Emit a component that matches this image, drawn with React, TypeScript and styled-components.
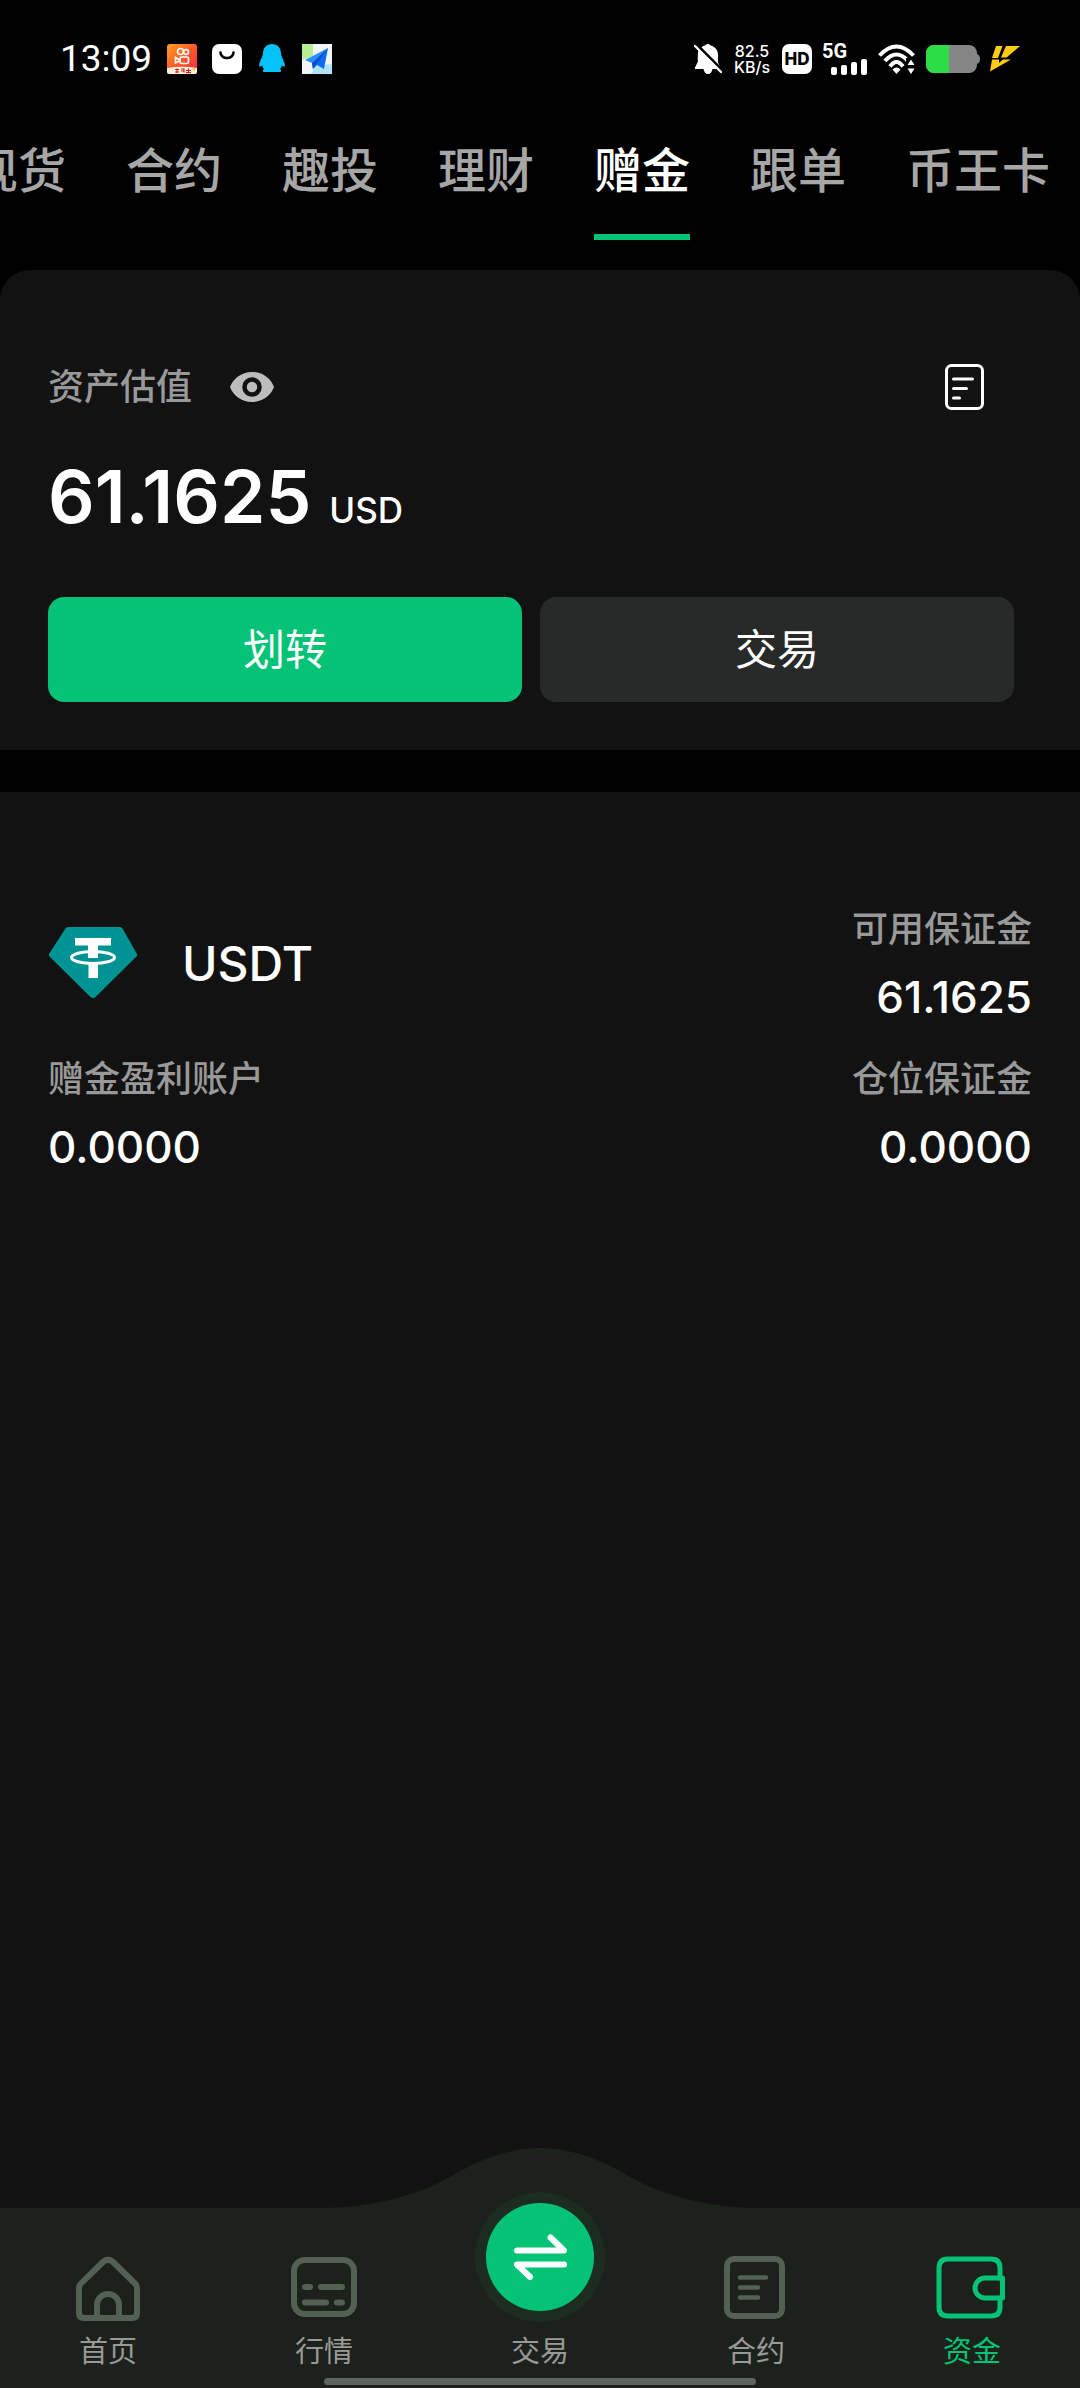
import React from 'react';
import styled, { createGlobalStyle } from 'styled-components';

const color = {
  green: '#04c276',
  panel: '#121212',
  nav: '#1c211c',
  muted: '#999999',
  tab: '#a6a6a6',
  navIcon: '#536053',
};

const GlobalStyle = createGlobalStyle`
  * { box-sizing: border-box; }
  body {
    margin: 0;
    background: #000;
    color: #fff;
    font-family: Inter, "Noto Sans CJK SC", sans-serif;
  }
  button { font: inherit; color: inherit; border: 0; background: none; padding: 0; }
  a { color: inherit; text-decoration: none; }
  svg { display: block; flex: none; }
  dl, dd, h2, p { margin: 0; font-weight: inherit; }
`;

const Page = styled.div`
  display: flex;
  flex-direction: column;
  min-height: 100vh;
`;

/* ---------- status bar ---------- */

const StatusBar = styled.header`
  display: flex;
  align-items: center;
  justify-content: space-between;
  height: 118px;
  padding: 0 60px;
`;

const StatusGroup = styled.div<{ $gap: number }>`
  display: flex;
  align-items: center;
  gap: ${(p) => p.$gap}px;
`;

const Clock = styled.time`
  font-family: Roboto, sans-serif;
  font-size: 37px;
  line-height: 40px;
`;

const Speed = styled.div`
  display: flex;
  flex-direction: column;
  align-items: center;
  padding: 0 2px;
  font-size: 16px;
  line-height: 16px;
  font-weight: 500;
`;

const HdBadge = styled.span`
  display: grid;
  place-items: center;
  width: 30px;
  height: 30px;
  border-radius: 7px;
  background: #fff;
  color: #000;
  font-size: 17px;
  line-height: 17px;
  font-weight: 800;
`;

const Signal = styled.div`
  display: flex;
  flex-direction: column;
  width: 46px;
  height: 32px;
`;

const SignalKind = styled.span`
  font-family: Roboto, sans-serif;
  font-size: 20px;
  line-height: 16px;
  font-weight: 700;
`;

const Bars = styled.svg`
  align-self: flex-end;
`;

/* ---------- tabs ---------- */

const Tabs = styled.nav`
  display: flex;
  justify-content: flex-end;
  gap: 60px;
  padding: 23px 30px 30px;
  overflow: hidden;
`;

const Tab = styled.a<{ $active?: boolean }>`
  flex: none;
  padding-bottom: 33px;
  border-bottom: 6px solid ${(p) => (p.$active ? color.green : 'transparent')};
  color: ${(p) => (p.$active ? '#fff' : color.tab)};
  font-size: 48px;
  line-height: 60px;
  font-weight: 500;
`;

/* ---------- balance ---------- */

const Balance = styled.section`
  padding: 94px 66px 48px 48px;
  border-radius: 30px 30px 0 0;
  background: ${color.panel};
`;

const BalanceHead = styled.div`
  display: flex;
  align-items: center;
  height: 46px;
`;

const BalanceTitle = styled.h2`
  color: ${color.muted};
  font-size: 36px;
  line-height: 46px;
  font-weight: 500;
`;

const IconButton = styled.button<{ $push?: boolean }>`
  margin-left: ${(p) => (p.$push ? 'auto' : '38px')};
  margin-right: ${(p) => (p.$push ? '30px' : '0')};
`;

const Amount = styled.p`
  display: flex;
  align-items: baseline;
  gap: 18px;
  margin-top: 45px;
  font-size: 73px;
  line-height: 84px;
  font-weight: 600;
`;

const Unit = styled.span`
  font-size: 35px;
  line-height: 36px;
  font-weight: 500;
`;

const Actions = styled.div`
  display: grid;
  grid-template-columns: 1fr 1fr;
  gap: 18px;
  margin-top: 58px;
`;

const Action = styled.button<{ $primary?: boolean }>`
  height: 105px;
  border-radius: 16px;
  background: ${(p) => (p.$primary ? color.green : '#282a29')};
  font-size: 42px;
  line-height: 60px;
`;

/* ---------- assets ---------- */

const Assets = styled.main`
  flex: 1;
  margin-top: 42px;
  padding: 110px 48px;
  background: ${color.panel};
`;

const AssetGrid = styled.dl`
  display: grid;
  grid-template-columns: 1fr 1fr;
  row-gap: 28px;
`;

const Coin = styled.div`
  display: flex;
  align-items: center;
  gap: 44px;
  font-size: 48px;
  font-weight: 500;
`;

const Metric = styled.div<{ $end?: boolean }>`
  display: flex;
  flex-direction: column;
  gap: 14px;
  text-align: ${(p) => (p.$end ? 'right' : 'left')};
`;

const MetricLabel = styled.dt`
  color: ${color.muted};
  font-size: 36px;
  line-height: 54px;
  font-weight: 500;
`;

const MetricValue = styled.dd`
  font-size: 44px;
  line-height: 54px;
  font-weight: 500;
`;

/* ---------- bottom navigation ---------- */

const BottomNav = styled.nav`
  position: sticky;
  bottom: 0;
  display: grid;
  grid-template-columns: repeat(5, 1fr);
  background: ${color.nav};
`;

const Hump = styled.svg`
  position: absolute;
  left: 50%;
  bottom: 100%;
  transform: translateX(-50%);
`;

const NavItem = styled.a<{ $active?: boolean }>`
  position: relative;
  display: flex;
  flex-direction: column;
  align-items: center;
  justify-content: flex-end;
  gap: 12px;
  height: 180px;
  padding-bottom: 18px;
  color: ${(p) => (p.$active ? color.green : color.muted)};
  font-size: 29px;
  line-height: 36px;
`;

const HomeIndicator = styled.div`
  position: absolute;
  left: 50%;
  bottom: 3px;
  width: 40%;
  height: 7px;
  border-radius: 4px;
  background: #5f655f;
  transform: translateX(-50%);
`;

/* ---------- drawings ---------- */

const VideoAppIcon = () => (
  <svg width="30" height="30" viewBox="0 0 30 30">
    <defs>
      <linearGradient id="sunset" x1="0" y1="0" x2="1" y2="1">
        <stop offset="0" stopColor="#ffa01e" />
        <stop offset="0.5" stopColor="#ff5a2e" />
        <stop offset="1" stopColor="#f5254a" />
      </linearGradient>
    </defs>
    <rect width="30" height="30" rx="3" fill="url(#sunset)" />
    <g fill="none" stroke="#fff" strokeWidth="1.6">
      <circle cx="13.5" cy="7.5" r="3" />
      <circle cx="19" cy="8" r="2.5" />
      <rect x="13" y="13" width="8.5" height="6.5" rx="1.5" />
      <path d="M12.5 16 8.5 13.500V19L12.5 17" />
    </g>
    <path d="M0 24Q15 21.5 30 24V28a2 2 0 0 1-2 2H2a2 2 0 0 1-2-2Z" fill="#ffeeda" />
    <path d="M8 25.5h4M8 28h4M10 24.5v4.5M14 25h3v3.5M14 27h3M19 26.5h5M21.5 24.5v4M19 28.7h5" stroke="#c8281e" strokeWidth="1.2" fill="none" />
    <circle cx="27" cy="25" r="1.5" fill="#ffc83c" />
  </svg>
);

const BagAppIcon = () => (
  <svg width="30" height="30" viewBox="0 0 30 30">
    <rect width="30" height="30" rx="7" fill="#fff" />
    <path d="M8.5 8.5a6.5 5.5 0 0 0 13 0" fill="none" stroke="#000" strokeWidth="2.6" strokeLinecap="round" />
  </svg>
);

const PenguinIcon = () => (
  <svg width="30" height="30" viewBox="0 0 30 30">
    <path
      d="M15 0C9.500 0 6 4 6 9.500c0 3-3.800 7.500-3.800 12 0 2 1.500 1 3 0 .3 1.600 1 2.600 2 3.500-2 .8-1.700 3 .3 3h15c2 0 2.300-2.200.3-3 1-.9 1.700-1.900 2-3.500 1.500 1 3 2 3 0 0-4.500-3.800-9-3.800-12C24 4 20.500 0 15 0Z"
      fill="#05c3f9"
    />
  </svg>
);

const MapAppIcon = () => (
  <svg width="30" height="30" viewBox="0 0 30 30">
    <rect width="30" height="30" fill="#f1f6fa" />
    <path d="M0 0h11v12L0 16Z" fill="#b6ec92" />
    <path d="M9 30 14 22 30 20V30Z" fill="#aee3fb" />
    <path d="M26 4 3 16l7 3Z" fill="#2a90ff" />
    <path d="M26 4 10 19l1 6 4-4 7 4Z" fill="#0b6cf2" />
    <path d="M26 4 10 19l1 6Z" fill="#0a4fd0" />
  </svg>
);

const MutedBellIcon = () => (
  <svg width="28" height="30" viewBox="0 0 28 30">
    <path
      d="M13.500 0a3 3 0 0 0-2.600 1.600C6 3 3.800 6.500 3.800 11v7L1 23.500c-.4 1 .1 1.500 1 1.500h7.500c.5 3 2.300 5 4.500 5s4-2 4.500-5H25c1 0 1.500-.6 1-1.500L24 18v-7c0-4.500-2.300-8-7.400-9.400A3.300 3.300 0 0 0 13.500 0Z"
      fill="#fff"
    />
    <path d="M2 0 28 26" stroke="#000" strokeWidth="3" />
    <path d="M1 2 27 28" stroke="#fff" strokeWidth="2.4" strokeLinecap="round" />
  </svg>
);

const SignalBars = () => (
  <Bars width="37" height="16" viewBox="0 0 37 16" fill="#fff">
    <rect x="0" y="8" width="6" height="8" rx="2" />
    <rect x="10" y="6" width="6" height="10" rx="2" />
    <rect x="20" y="3" width="6" height="13" rx="2" />
    <rect x="30" y="0" width="6" height="16" rx="2" />
  </Bars>
);

const WifiIcon = () => (
  <svg width="38" height="30" viewBox="0 0 38 30">
    <g fill="none" stroke="#fff" strokeWidth="4">
      <path d="M1.500 11.500Q18.500-6.500 35.500 11.500" />
      <path d="M7 17Q18.500 4 30 17" />
      <path d="M12 22.500Q18.500 13.500 25 22.500" />
    </g>
    <path d="M14.500 25.500Q18.500 21.500 22.500 25.500L18.500 30Z" fill="#fff" />
    <path d="M28 14h10v16H28Z" fill="#000" />
    <path d="M33 15.500l3.500 5.500h-7ZM33 30l3.500-5.500h-7Z" fill="#fff" />
  </svg>
);

const BatteryIcon = () => (
  <svg width="54" height="28" viewBox="0 0 54 28">
    <path d="M8 0H43a8 8 0 0 1 8 8v1q3 1 3 5t-3 5v1a8 8 0 0 1-8 8H8a8 8 0 0 1-8-8V8a8 8 0 0 1 8-8Z" fill="#868686" />
    <path d="M8 0H23V28H8a8 8 0 0 1-8-8V8a8 8 0 0 1 8-8Z" fill="#2bdc45" />
  </svg>
);

const ChargeIcon = () => (
  <svg width="30" height="26" viewBox="0 0 30 26" fill="#ffcc14">
    <path d="M6 0H12.500L8 12H2Z" />
    <path d="M16 0H30L16.500 11.500H11Z" />
    <path d="M2 13.500H9V17L13 13.500H21L0 25.500Z" />
  </svg>
);

const EyeIcon = () => (
  <svg width="44" height="30" viewBox="0 0 44 30">
    <path d="M22 0C33 0 41 7 44 15 41 23 33 30 22 30S3 23 0 15C3 7 11 0 22 0Z" fill="#bdbdbd" />
    <circle cx="22" cy="15" r="7.5" fill="#bdbdbd" stroke="#121212" strokeWidth="4.5" />
  </svg>
);

const RecordsIcon = () => (
  <svg width="39" height="46" viewBox="0 0 39 46" fill="none" stroke="#fff" strokeWidth="3" strokeLinecap="round">
    <rect x="1.5" y="1.5" width="36" height="43" rx="5" />
    <path d="M8.500 15H27.500M8.500 24.500H21.500M8.500 34H14.500" />
  </svg>
);

const TetherIcon = () => (
  <svg width="90" height="72" viewBox="0 0 90 72">
    <path d="M20 0H72Q73.500 0 74.500 1.500L89 27Q89.500 28.500 88.500 29.500L47.500 70Q45 72 42.500 70L1.500 29.500Q.5 28.500 1 27L17.500 1.500Q18.500 0 20 0Z" fill="#009393" />
    <ellipse cx="45" cy="30.5" rx="21.5" ry="6" fill="none" stroke="#fff" strokeWidth="3" />
    <path d="M27 11H63V18.500H50V31H40V18.500H27Z" fill="#fff" />
    <path d="M40.500 37H50V51H40.500Z" fill="#fff" />
  </svg>
);

const NavSvg = styled.svg.attrs({ width: 72, height: 66, viewBox: '0 0 72 66', fill: 'none' })<{ $lit?: boolean }>`
  stroke: ${(p) => (p.$lit ? color.green : color.navIcon)};
  stroke-width: ${(p) => (p.$lit ? 5 : 6)};
  stroke-linecap: round;
  stroke-linejoin: round;
`;

const HomeIcon = () => (
  <NavSvg>
    <path d="M31 6Q36 1.500 41 6L63.500 28Q65 29.500 65 32V57Q65 62 60 62H12Q7 62 7 57V32Q7 29.500 8.500 28Z" />
    <path d="M25 61V49a11 11 0 0 1 22 0V61" />
  </NavSvg>
);

const MarketIcon = () => (
  <NavSvg>
    <rect x="6" y="4" width="60" height="54" rx="11" />
    <path d="M17 31H22M33 31H54M17 46.500H38M49 46.500H54" />
  </NavSvg>
);

const TradeIcon = () => (
  <svg width="130" height="130" viewBox="0 0 130 130">
    <circle cx="65" cy="65" r="65" fill="#1c2c20" />
    <circle cx="65" cy="65" r="54" fill={color.green} />
    <path d="M42 58.500H89L75.500 45.500M89 72.500H42L55 85" fill="none" stroke="#fff" strokeWidth="6" strokeLinecap="round" strokeLinejoin="round" />
  </svg>
);

const ContractIcon = () => (
  <NavSvg>
    <rect x="7" y="3" width="55" height="57" rx="7" />
    <path d="M20 21.500H46M20 31.500H38M20 41.500H38" strokeWidth="4.5" />
  </NavSvg>
);

const WalletIcon = () => (
  <NavSvg $lit>
    <path d="M64 22V12Q64 3 55 3H12Q3 3 3 12V51Q3 60 12 60H55Q64 60 64 51V42" />
    <path d="M66.500 22H49a10 10 0 0 0 0 20H66.500Z" />
  </NavSvg>
);

const tabs = ['现货', '合约', '趣投', '理财', '赠金', '跟单', '币王卡'];

const navItems = [
  { label: '首页', Icon: HomeIcon },
  { label: '行情', Icon: MarketIcon },
  { label: '交易', Icon: TradeIcon },
  { label: '合约', Icon: ContractIcon },
  { label: '资金', Icon: WalletIcon },
];

function MetricCell({ label, value, end }: { label: string; value: string; end?: boolean }) {
  return (
    <Metric $end={end}>
      <MetricLabel>{label}</MetricLabel>
      <MetricValue>{value}</MetricValue>
    </Metric>
  );
}

export default function App() {
  return (
    <Page>
      <GlobalStyle />
      <StatusBar>
        <StatusGroup $gap={15}>
          <Clock>13:09</Clock>
          <VideoAppIcon />
          <BagAppIcon />
          <PenguinIcon />
          <MapAppIcon />
        </StatusGroup>
        <StatusGroup $gap={10}>
          <MutedBellIcon />
          <Speed>
            <span>82.5</span>
            <span>KB/s</span>
          </Speed>
          <HdBadge>HD</HdBadge>
          <Signal>
            <SignalKind>5G</SignalKind>
            <SignalBars />
          </Signal>
          <WifiIcon />
          <BatteryIcon />
          <ChargeIcon />
        </StatusGroup>
      </StatusBar>

      <Tabs>
        {tabs.map((name) => (
          <Tab key={name} href="#" $active={name === '赠金'}>
            {name}
          </Tab>
        ))}
      </Tabs>

      <Balance>
        <BalanceHead>
          <BalanceTitle>资产估值</BalanceTitle>
          <IconButton type="button" aria-label="显示或隐藏">
            <EyeIcon />
          </IconButton>
          <IconButton type="button" aria-label="记录" $push>
            <RecordsIcon />
          </IconButton>
        </BalanceHead>
        <Amount>
          61.1625 <Unit>USD</Unit>
        </Amount>
        <Actions>
          <Action type="button" $primary>
            划转
          </Action>
          <Action type="button">交易</Action>
        </Actions>
      </Balance>

      <Assets>
        <AssetGrid>
          <Coin>
            <TetherIcon />
            USDT
          </Coin>
          <MetricCell label="可用保证金" value="61.1625" end />
          <MetricCell label="赠金盈利账户" value="0.0000" />
          <MetricCell label="仓位保证金" value="0.0000" end />
        </AssetGrid>
      </Assets>

      <BottomNav>
        <Hump width="440" height="60" viewBox="0 0 440 60">
          <path d="M0 60C50 60 95 48 128 30 155 14 185 0 220 0S285 14 312 30C345 48 390 60 440 60Z" fill={color.nav} />
        </Hump>
        {navItems.map(({ label, Icon }) => (
          <NavItem key={label} href="#" $active={label === '资金'}>
            <Icon />
            {label}
          </NavItem>
        ))}
        <HomeIndicator />
      </BottomNav>
    </Page>
  );
}
